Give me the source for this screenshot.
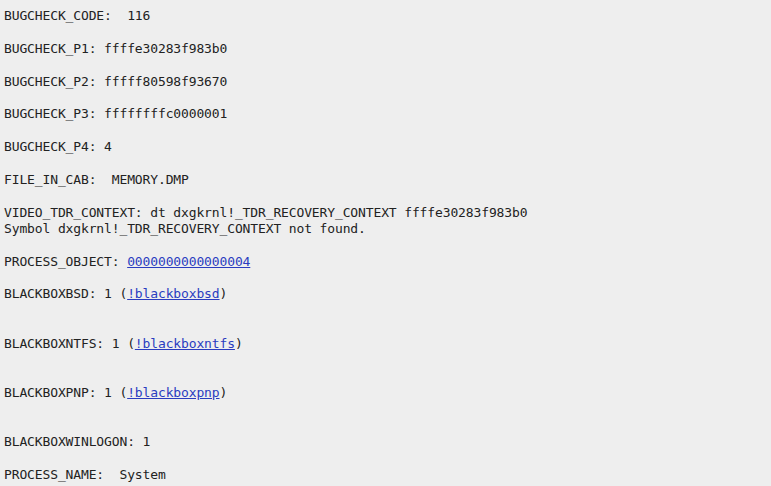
import React from "react";

const L = ({ children }) => (
  <a href="#" className="text-[#2a3cc0] underline">
    {children}
  </a>
);

export default function App() {
  const lines = [
    "BUGCHECK_CODE:  116",
    "",
    "BUGCHECK_P1: ffffe30283f983b0",
    "",
    "BUGCHECK_P2: fffff80598f93670",
    "",
    "BUGCHECK_P3: ffffffffc0000001",
    "",
    "BUGCHECK_P4: 4",
    "",
    "FILE_IN_CAB:  MEMORY.DMP",
    "",
    "VIDEO_TDR_CONTEXT: dt dxgkrnl!_TDR_RECOVERY_CONTEXT ffffe30283f983b0",
    "Symbol dxgkrnl!_TDR_RECOVERY_CONTEXT not found.",
    "",
    <>PROCESS_OBJECT: <L>0000000000000004</L></>,
    "",
    <>BLACKBOXBSD: 1 (<L>!blackboxbsd</L>)</>,
    "",
    "",
    <>BLACKBOXNTFS: 1 (<L>!blackboxntfs</L>)</>,
    "",
    "",
    <>BLACKBOXPNP: 1 (<L>!blackboxpnp</L>)</>,
    "",
    "",
    "BLACKBOXWINLOGON: 1",
    "",
    "PROCESS_NAME:  System",
  ];
  return (
    <div className="min-h-screen w-full bg-[#eeeeee] pt-[8px] pl-[4px] text-[#222222] font-['DejaVu_Sans_Mono','Liberation_Mono',monospace] text-[13px] leading-[16.39px] tracking-[-0.13px]">
      {lines.map((l, i) => (
        <div key={i} className="h-[16.39px] whitespace-pre">
          {l}
        </div>
      ))}
    </div>
  );
}
